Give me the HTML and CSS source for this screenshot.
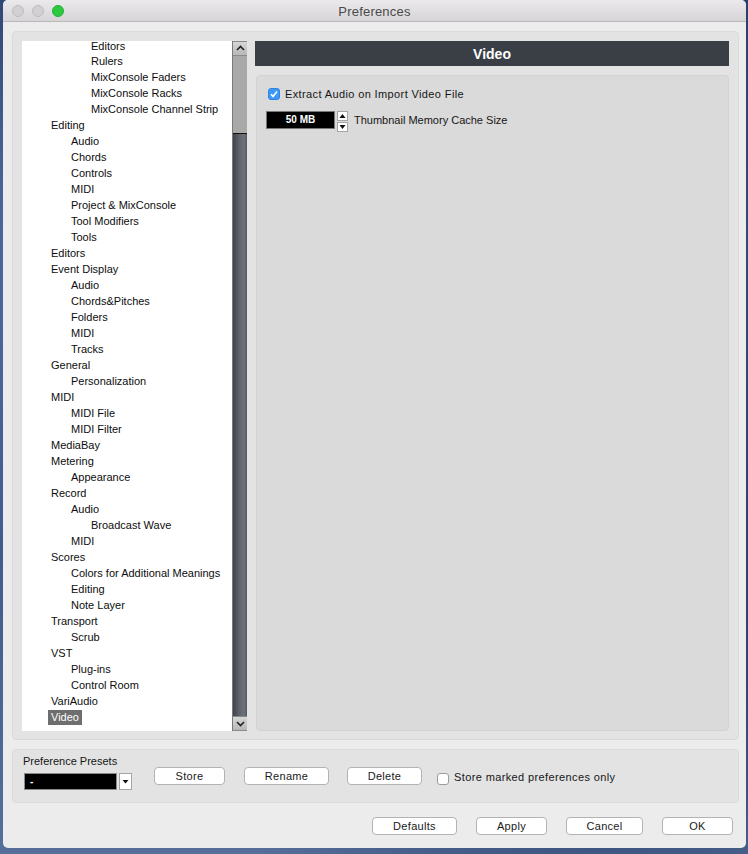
FILE: index.html
```html
<!DOCTYPE html>
<html>
<head>
<meta charset="utf-8">
<link rel="stylesheet" href="styles.css">
</head>
<body>
<div class="window">
  <div class="titlebar">
    <div class="lights">
      <span class="light"></span><span class="light"></span><span class="light green"></span>
    </div>
    <div class="title">Preferences</div>
    <div></div>
  </div>

  <div class="main-panel">
    <div class="tree-wrap">
      <ul class="tree">
        <li class="l2 first">Editors</li>
        <li class="l2">Rulers</li>
        <li class="l2">MixConsole Faders</li>
        <li class="l2">MixConsole Racks</li>
        <li class="l2">MixConsole Channel Strip</li>
        <li class="l0">Editing</li>
        <li class="l1">Audio</li>
        <li class="l1">Chords</li>
        <li class="l1">Controls</li>
        <li class="l1">MIDI</li>
        <li class="l1">Project &amp; MixConsole</li>
        <li class="l1">Tool Modifiers</li>
        <li class="l1">Tools</li>
        <li class="l0">Editors</li>
        <li class="l0">Event Display</li>
        <li class="l1">Audio</li>
        <li class="l1">Chords&amp;Pitches</li>
        <li class="l1">Folders</li>
        <li class="l1">MIDI</li>
        <li class="l1">Tracks</li>
        <li class="l0">General</li>
        <li class="l1">Personalization</li>
        <li class="l0">MIDI</li>
        <li class="l1">MIDI File</li>
        <li class="l1">MIDI Filter</li>
        <li class="l0">MediaBay</li>
        <li class="l0">Metering</li>
        <li class="l1">Appearance</li>
        <li class="l0">Record</li>
        <li class="l1">Audio</li>
        <li class="l2">Broadcast Wave</li>
        <li class="l1">MIDI</li>
        <li class="l0">Scores</li>
        <li class="l1">Colors for Additional Meanings</li>
        <li class="l1">Editing</li>
        <li class="l1">Note Layer</li>
        <li class="l0">Transport</li>
        <li class="l1">Scrub</li>
        <li class="l0">VST</li>
        <li class="l1">Plug-ins</li>
        <li class="l1">Control Room</li>
        <li class="l0">VariAudio</li>
        <li class="l0"><span class="selected">Video</span></li>
      </ul>
      <div class="scrollbar">
        <div class="sb-btn">
          <svg width="13" height="13" viewBox="0 0 13 13"><polyline points="3,8 6.5,4.5 10,8" fill="none" stroke="#222" stroke-width="1.6"/></svg>
        </div>
        <div class="sb-track"></div>
        <div class="sb-thumb"></div>
        <div class="sb-btn">
          <svg width="13" height="13" viewBox="0 0 13 13"><polyline points="3,5 6.5,8.5 10,5" fill="none" stroke="#222" stroke-width="1.6"/></svg>
        </div>
      </div>
    </div>

    <div class="right">
      <div class="header">Video</div>
      <div class="content">
        <div class="check-row">
          <span class="cb checked">
            <svg width="12" height="12" viewBox="0 0 12 12"><polyline points="3,6.3 5,8.5 9,3.5" fill="none" stroke="#fff" stroke-width="1.7"/></svg>
          </span>
          <span class="label wide">Extract Audio on Import Video File</span>
        </div>
        <div class="num-row">
          <span class="numfield">50 MB</span>
          <span class="spinner">
            <span class="sp"><svg width="9" height="8" viewBox="0 0 9 8"><polygon points="1.5,6 4.5,2 7.5,6" fill="#111"/></svg></span>
            <span class="sp"><svg width="9" height="8" viewBox="0 0 9 8"><polygon points="1.5,2 4.5,6 7.5,2" fill="#111"/></svg></span>
          </span>
          <span class="label">Thumbnail Memory Cache Size</span>
        </div>
      </div>
    </div>
  </div>

  <div class="presets">
    <div class="preset-left">
      <div class="preset-title">Preference Presets</div>
      <div class="dropdown-row">
        <span class="dropdown">-</span>
        <span class="dd-arrow"><svg width="11" height="15" viewBox="0 0 11 15"><polygon points="2.5,6 5.5,9.5 8.5,6" fill="#111"/></svg></span>
      </div>
    </div>
    <div class="preset-buttons">
      <button class="btn w-store">Store</button>
      <button class="btn w-rename">Rename</button>
      <button class="btn w-delete">Delete</button>
      <span class="cb plain"></span>
      <span class="label wide">Store marked preferences only</span>
    </div>
  </div>

  <div class="actions">
    <button class="btn w-defaults">Defaults</button>
    <button class="btn w-apply">Apply</button>
    <button class="btn w-cancel">Cancel</button>
    <button class="btn w-ok">OK</button>
  </div>
</div>
</body>
</html>
```

FILE: styles.css
```css
* { box-sizing: border-box; }

body {
  margin: 0;
  width: 748px;
  height: 854px;
  overflow: hidden;
  font-family: "Liberation Sans", Arial, sans-serif;
  font-size: 11px;
  color: #111;
  background:
    radial-gradient(ellipse at 20% 30%, #5d7bb0 0%, rgba(93,123,176,0) 40%),
    radial-gradient(ellipse at 80% 70%, #20345e 0%, rgba(32,52,94,0) 50%),
    linear-gradient(180deg, #2a3f6c 0%, #3e5a8c 60%, #566f9a 100%);
}

.window {
  margin-left: 3px;
  width: 743px;
  height: 848px;
  background: #ececec;
  border-radius: 5px;
  display: flex;
  flex-direction: column;
  overflow: hidden;
}

/* title bar */
.titlebar {
  height: 22px;
  flex: none;
  display: grid;
  grid-template-columns: 1fr auto 1fr;
  align-items: center;
  background: linear-gradient(180deg, #ebe9eb 0%, #d6d4d6 100%);
  border-bottom: 1px solid #b9b9b9;
}
.lights {
  display: flex;
  gap: 8px;
  padding-left: 9px;
  padding-top: 1px;
}
.light {
  width: 12px;
  height: 12px;
  border-radius: 50%;
  background: #d2d0d2;
  border: 1px solid #bdbbbd;
}
.light.green {
  background: #2cc93f;
  border-color: #22b034;
}
.title {
  font-size: 13px;
  letter-spacing: 0.2px;
  color: #4b4b4b;
  padding-top: 1px;
}

/* main panel */
.main-panel {
  flex: 1;
  margin: 9px 7px 0 9px;
  background: #e3e3e3;
  border: 1px solid #dadada;
  border-radius: 4px;
  padding: 9px 9px 8px 9px;
  display: flex;
  gap: 8px;
  min-height: 0;
}

.tree-wrap {
  width: 225px;
  flex: none;
  display: flex;
  background: #fff;
  overflow: hidden;
}
.tree {
  list-style: none;
  margin: 0;
  padding: 0;
  flex: 1;
  overflow: hidden;
}
.tree li {
  height: 16px;
  line-height: 16px;
  white-space: nowrap;
  color: #0d0d0d;
}
.tree li.first {
  height: 12px;
  line-height: 10px;
}
.tree .l0 { padding-left: 29px; }
.tree .l1 { padding-left: 49px; }
.tree .l2 { padding-left: 69px; }
.tree .selected {
  display: inline-block;
  margin-left: -3px;
  padding: 0 3px;
  height: 15px;
  line-height: 15px;
  background: #6e6e6e;
  color: #fff;
}

.scrollbar {
  width: 15px;
  flex: none;
  display: flex;
  flex-direction: column;
  border-left: 1px solid #7a7a7a;
}
.sb-btn {
  height: 15px;
  flex: none;
  display: flex;
  align-items: center;
  justify-content: center;
  background: linear-gradient(180deg, #d6d6d6 0%, #b8b8b8 100%);
  border-top: 1px solid #8a8a8a;
  border-bottom: 1px solid #8a8a8a;
}
.sb-track {
  height: 77px;
  flex: none;
  background: #a9a9a9;
}
.sb-thumb {
  flex: 1;
  background: linear-gradient(90deg, #3f4349 0%, #5f636a 45%, #6e7279 80%, #55595f 100%);
  border-top: 1px solid #111;
}

/* right side */
.right {
  flex: 1;
  display: flex;
  flex-direction: column;
  gap: 9px;
}
.header {
  height: 25px;
  flex: none;
  background: #3a3e45;
  color: #fff;
  font-weight: bold;
  font-size: 14px;
  line-height: 26px;
  text-align: center;
}
.content {
  flex: 1;
  margin-left: 1px;
  background: #dadada;
  border: 1px solid #d2d2d2;
  border-radius: 4px;
  padding: 12px 10px;
}
.check-row {
  display: flex;
  align-items: center;
  gap: 5px;
  height: 12px;
  padding-left: 1px;
}
.num-row {
  display: flex;
  align-items: center;
  margin-top: 11px;
  height: 18px;
  margin-left: -1px;
}
.label {
  color: #161616;
  font-size: 11px;
  white-space: nowrap;
}
.label.wide { letter-spacing: 0.38px; }

.cb {
  width: 12px;
  height: 12px;
  border-radius: 3px;
  display: inline-flex;
  flex: none;
}
.cb.checked {
  background: #3c98f7;
  border: 1px solid #2f84e0;
}
.cb.checked svg { margin: -1px; }
.cb.plain {
  width: 12px;
  height: 12px;
  background: #fff;
  border: 1px solid #9c9c9c;
  border-radius: 3px;
}

.numfield {
  width: 69px;
  height: 18px;
  background: #000;
  border: 1px solid #777;
  color: #fff;
  font-weight: bold;
  font-size: 10px;
  line-height: 16px;
  text-align: center;
}
.spinner {
  margin-left: 2px;
  width: 11px;
  height: 18px;
  display: flex;
  flex-direction: column;
  gap: 1px;
}
.sp {
  flex: 1;
  background: #fff;
  border: 1px solid #a5a5a5;
  display: flex;
  align-items: center;
  justify-content: center;
}
.sp svg { flex: none; }
.num-row .label { margin-left: 6px; }

/* presets */
.presets {
  flex: none;
  height: 54px;
  margin: 9px 7px 0 9px;
  background: #e3e3e3;
  border: 1px solid #dadada;
  border-radius: 4px;
  padding-left: 10px;
  display: flex;
}
.preset-left {
  display: flex;
  flex-direction: column;
}
.preset-title {
  margin-top: 4px;
  height: 14px;
  line-height: 14px;
  color: #161616;
}
.dropdown-row {
  margin-top: 5px;
  display: flex;
  gap: 2px;
  padding-left: 1px;
}
.dropdown {
  width: 93px;
  height: 17px;
  background: #000;
  border: 1px solid #8a8a8a;
  color: #fff;
  font-weight: bold;
  font-size: 10px;
  line-height: 15px;
  padding-left: 5px;
}
.dd-arrow {
  width: 13px;
  height: 17px;
  background: #fff;
  border: 1px solid #a5a5a5;
  display: flex;
  align-items: center;
  justify-content: center;
}
.preset-buttons {
  margin-left: 22px;
  margin-top: 17px;
  display: flex;
  align-items: flex-start;
  height: 18px;
}
.preset-buttons .cb.plain { margin-top: 6px; margin-left: 15px; }
.preset-buttons .label { margin-left: 5px; margin-top: 4px; }

.btn {
  height: 18px;
  background: #fff;
  border: 1px solid #b3b3b3;
  border-radius: 4px;
  font-family: "Liberation Sans", Arial, sans-serif;
  font-size: 11px;
  letter-spacing: 0.3px;
  color: #1a1a1a;
  padding: 0;
  line-height: 16px;
  flex: none;
}
.w-store { width: 71px; }
.w-rename { width: 85px; margin-left: 19px; }
.w-delete { width: 75px; margin-left: 18px; }

/* bottom actions */
.actions {
  flex: none;
  height: 45px;
  display: flex;
  justify-content: flex-end;
  align-items: center;
  gap: 19px;
  padding-right: 13px;
}
.w-defaults { width: 85px; }
.w-apply { width: 71px; }
.w-cancel { width: 77px; }
.w-ok { width: 71px; }
```
